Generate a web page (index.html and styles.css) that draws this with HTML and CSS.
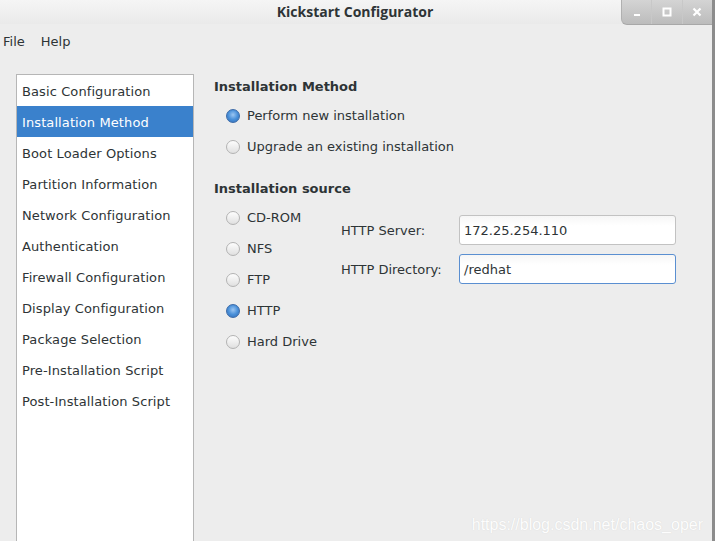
FILE: index.html
```html
<!DOCTYPE html>
<html>
<head>
<meta charset="utf-8">
<link rel="stylesheet" href="styles.css">
</head>
<body>
<div class="window">
  <div class="titlebar">
    <span class="title">Kickstart Configurator</span>
    <div class="winbtns">
      <div class="wb"><svg width="10" height="10" viewBox="0 0 10 10"><rect x="2" y="7" width="6" height="2" fill="#fff"/></svg></div>
      <div class="wb"><svg width="10" height="10" viewBox="0 0 10 10"><rect x="1.5" y="1.5" width="7" height="7" fill="none" stroke="#fff" stroke-width="2"/></svg></div>
      <div class="wb"><svg width="10" height="10" viewBox="0 0 10 10"><path d="M1.5 1.5L8.5 8.5M8.5 1.5L1.5 8.5" stroke="#fff" stroke-width="2.2"/></svg></div>
    </div>
  </div>
  <div class="menubar">
    <span class="menu">File</span>
    <span class="menu">Help</span>
  </div>
  <div class="body">
    <ul class="sidebar">
      <li>Basic Configuration</li>
      <li class="selected">Installation Method</li>
      <li>Boot Loader Options</li>
      <li>Partition Information</li>
      <li>Network Configuration</li>
      <li>Authentication</li>
      <li>Firewall Configuration</li>
      <li>Display Configuration</li>
      <li>Package Selection</li>
      <li>Pre-Installation Script</li>
      <li>Post-Installation Script</li>
    </ul>
    <div class="content">
      <h3 class="section">Installation Method</h3>
      <div class="radios method">
        <div class="radio-row"><span class="radio checked"></span><span>Perform new installation</span></div>
        <div class="radio-row"><span class="radio"></span><span>Upgrade an existing installation</span></div>
      </div>
      <h3 class="section second">Installation source</h3>
      <div class="source">
        <div class="radios">
          <div class="radio-row"><span class="radio"></span><span>CD-ROM</span></div>
          <div class="radio-row"><span class="radio"></span><span>NFS</span></div>
          <div class="radio-row"><span class="radio"></span><span>FTP</span></div>
          <div class="radio-row"><span class="radio checked"></span><span>HTTP</span></div>
          <div class="radio-row"><span class="radio"></span><span>Hard Drive</span></div>
        </div>
        <div class="fields">
          <label class="lbl">HTTP Server:</label>
          <div class="entry">172.25.254.110</div>
          <label class="lbl">HTTP Directory:</label>
          <div class="entry focused">/redhat</div>
        </div>
      </div>
      <div class="watermark">https://blog.csdn.net/chaos_oper</div>
    </div>
  </div>
</div>
</body>
</html>
```
FILE: styles.css
```css
html, body {
  margin: 0;
  padding: 0;
  width: 715px;
  height: 541px;
  overflow: hidden;
  background: #ededed;
}
.window {
  width: 712px;
  height: 541px;
  border-right: 3px solid #8c8c8c;
  display: flex;
  flex-direction: column;
  font-family: "DejaVu Sans", sans-serif;
  font-size: 13px;
  color: #2e3436;
  background: #ededed;
}
.titlebar {
  height: 24px;
  flex: none;
  display: flex;
  align-items: center;
  justify-content: center;
  position: relative;
  background: linear-gradient(#f5f5f5, #eaeaea);
}
.title {
  font-family: "Open Sans", sans-serif;
  font-weight: 700;
  font-size: 14px;
  color: #2e3436;
  margin-top: -2px;
  margin-left: -2px;
}
.winbtns {
  position: absolute;
  right: 0;
  top: 0;
  height: 24px;
  width: 90px;
  display: flex;
  background: linear-gradient(#d4d4d4, #bcbcbc);
  border-bottom-left-radius: 6px;
  border-left: 1px solid #b0b0b0;
  border-bottom: 1px solid #a8a8a8;
}
.wb {
  flex: 1;
  display: flex;
  align-items: center;
  justify-content: center;
  border-left: 1px solid #c8c8c8;
}
.wb:first-child { border-left: none; }
.menubar {
  height: 34px;
  flex: none;
  display: flex;
  align-items: center;
  gap: 16px;
  padding-left: 3px;
}
.menu { color: #2e3436; }
.body {
  flex: 1;
  display: flex;
  padding-left: 16px;
  padding-top: 16px;
  gap: 20px;
  min-height: 0;
}
.sidebar {
  list-style: none;
  margin: 0;
  padding: 0;
  width: 176px;
  background: #fff;
  border: 1px solid #b6b6b6;
  border-bottom: none;
  flex: none;
}
.sidebar li {
  height: 31px;
  box-sizing: border-box;
  padding-top: 2px;
  line-height: 29px;
  padding-left: 5px;
  white-space: nowrap;
  letter-spacing: 0.1px;
}
.sidebar li.selected {
  background: #3a81cc;
  color: #fff;
}
.content {
  flex: 1;
  position: relative;
  padding-top: 3px;
}
.section {
  margin: 0;
  font-weight: bold;
  font-size: 13px;
  height: 20px;
  line-height: 20px;
  color: #2e3436;
}
.section.second { margin-top: 17px; }
.radios {
  display: flex;
  flex-direction: column;
  padding-left: 12px;
  box-sizing: border-box;
}
.radios.method { margin-top: 3px; }
.radio-row {
  height: 31px;
  display: flex;
  align-items: center;
  gap: 7px;
}
.radio {
  width: 12px;
  height: 12px;
  border-radius: 50%;
  border: 1px solid #b3b3b3;
  background: linear-gradient(#fdfdfd, #e0e0e0);
  flex: none;
  box-sizing: content-box;
}
.radio.checked {
  border-color: #3b6aa8;
  background: radial-gradient(circle at 50% 40%, #9cc6f2 0, #4a90d9 50%, #2f6db8 100%);
}
.source {
  display: flex;
  align-items: flex-start;
  margin-top: 3px;
}
.source .radios { width: 127px; flex: none; }
.fields {
  display: grid;
  grid-template-columns: 118px 217px;
  grid-auto-rows: 30px;
  row-gap: 9px;
  align-items: center;
  align-content: start;
  padding-top: 13px;
}
.lbl { color: #2e3436; padding-top: 1px; }
.entry {
  height: 30px;
  box-sizing: border-box;
  line-height: 28px;
  padding-top: 1px;
  border: 1px solid #c2c2c2;
  border-radius: 3px;
  background: linear-gradient(#f6f6f6, #ffffff 35%);
  padding-left: 4px;
}
.entry.focused {
  border-color: #5a8fd1;
}
.watermark {
  position: absolute;
  right: 9px;
  bottom: 7px;
  font-family: "Liberation Sans", sans-serif;
  font-size: 16px;
  color: #ffffff;
  opacity: 0.9;
  text-shadow: 0 0 1px #d0d0d0;
}
```
